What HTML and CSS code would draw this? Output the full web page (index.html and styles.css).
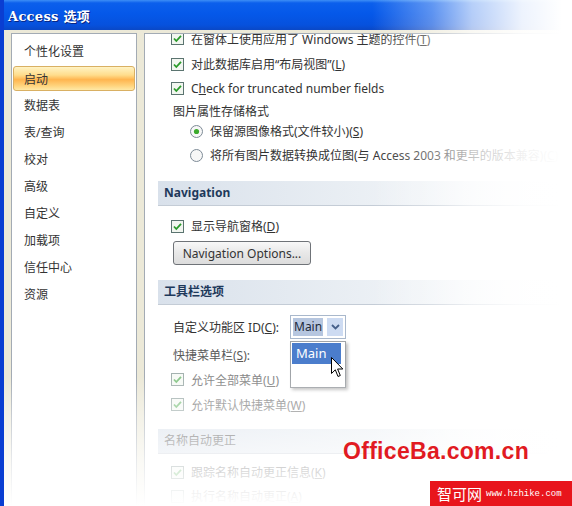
FILE: index.html
```html
<!DOCTYPE html>
<html lang="zh-CN">
<head>
    <meta charset="UTF-8">
    <title>Access 选项</title>
    <link rel="stylesheet" href="styles.css">
</head>
<body>
    <div class="window">
        <div class="titlebar">
            <span class="title">Access 选项</span>
        </div>
        <div class="frame">
            <ul class="nav">
                <li>个性化设置</li>
                <li class="active">启动</li>
                <li>数据表</li>
                <li>表/查询</li>
                <li>校对</li>
                <li>高级</li>
                <li>自定义</li>
                <li>加载项</li>
                <li>信任中心</li>
                <li>资源</li>
            </ul>
            <div class="pane">
                <div class="scroll">
                    <div class="row first">
                        <svg class="cb" viewBox="0 0 13 13"><rect x="0.5" y="0.5" width="12" height="12" fill="#f2f6f0" stroke="#5b7470"/><path d="M3 6.5 L5.3 9 L10 3.8" fill="none" stroke="#2a9a2a" stroke-width="1.8"/></svg>
                        <span>在窗体上使用应用了 Windows 主题的控件(<u>T</u>)</span>
                    </div>
                    <div class="row">
                        <svg class="cb" viewBox="0 0 13 13"><rect x="0.5" y="0.5" width="12" height="12" fill="#f2f6f0" stroke="#5b7470"/><path d="M3 6.5 L5.3 9 L10 3.8" fill="none" stroke="#2a9a2a" stroke-width="1.8"/></svg>
                        <span>对此数据库启用“布局视图”(<u>L</u>)</span>
                    </div>
                    <div class="row">
                        <svg class="cb" viewBox="0 0 13 13"><rect x="0.5" y="0.5" width="12" height="12" fill="#f2f6f0" stroke="#5b7470"/><path d="M3 6.5 L5.3 9 L10 3.8" fill="none" stroke="#2a9a2a" stroke-width="1.8"/></svg>
                        <span>C<u>h</u>eck for truncated number fields</span>
                    </div>
                    <div class="label">图片属性存储格式</div>
                    <div class="row radio-row">
                        <svg class="rb" viewBox="0 0 13 13"><circle cx="6.5" cy="6.5" r="6" fill="#f7f7f7" stroke="#7d8a96"/><circle cx="6.5" cy="6.5" r="2.6" fill="#3caa2c"/></svg>
                        <span>保留源图像格式(文件较小)(<u>S</u>)</span>
                    </div>
                    <div class="row radio-row">
                        <svg class="rb" viewBox="0 0 13 13"><circle cx="6.5" cy="6.5" r="6" fill="#f7f7f7" stroke="#7d8a96"/></svg>
                        <span>将所有图片数据转换成位图(与 Access 2003 和更早的版本兼容)(<u>C</u>)</span>
                    </div>

                    <div class="section nav-section">Navigation</div>
                    <div class="row after-section">
                        <svg class="cb" viewBox="0 0 13 13"><rect x="0.5" y="0.5" width="12" height="12" fill="#f2f6f0" stroke="#5b7470"/><path d="M3 6.5 L5.3 9 L10 3.8" fill="none" stroke="#2a9a2a" stroke-width="1.8"/></svg>
                        <span>显示导航窗格(<u>D</u>)</span>
                    </div>
                    <button class="btn">Navigation Options...</button>

                    <div class="section toolbar-section">工具栏选项</div>
                    <div class="field-row">
                        <span class="field-label">自定义功能区 ID(<u>C</u>):</span>
                        <div class="select">
                            <span class="select-value">Main</span>
                            <span class="select-arrow">
                                <svg viewBox="0 0 9 6" width="9" height="6"><path d="M1 1 L4.5 4.5 L8 1" fill="none" stroke="#46608a" stroke-width="1.8"/></svg>
                            </span>
                            <div class="dropdown">
                                <div class="dropdown-item">Main</div>
                            </div>
                            <svg class="cursor" viewBox="0 0 13 21" width="13" height="21"><path d="M0.5 0.5 L0.5 16.5 L4.3 12.8 L7 19.5 L9.3 18.5 L6.6 12 L11.8 12 Z" fill="#fff" stroke="#000" stroke-width="1"/></svg>
                        </div>
                    </div>
                    <div class="field-row second">
                        <span class="field-label dim">快捷菜单栏(<u>S</u>):</span>
                    </div>
                    <div class="row disabled">
                        <svg class="cb" viewBox="0 0 13 13"><rect x="0.5" y="0.5" width="12" height="12" fill="#f2f6f0" stroke="#5b7470"/><path d="M3 6.5 L5.3 9 L10 3.8" fill="none" stroke="#2a9a2a" stroke-width="1.8"/></svg>
                        <span>允许全部菜单(<u>U</u>)</span>
                    </div>
                    <div class="row disabled">
                        <svg class="cb" viewBox="0 0 13 13"><rect x="0.5" y="0.5" width="12" height="12" fill="#f2f6f0" stroke="#5b7470"/><path d="M3 6.5 L5.3 9 L10 3.8" fill="none" stroke="#2a9a2a" stroke-width="1.8"/></svg>
                        <span>允许默认快捷菜单(<u>W</u>)</span>
                    </div>

                    <div class="section name-section">名称自动更正</div>
                    <div class="row after-name">
                        <svg class="cb" viewBox="0 0 13 13"><rect x="0.5" y="0.5" width="12" height="12" fill="#f2f6f0" stroke="#5b7470"/><path d="M3 6.5 L5.3 9 L10 3.8" fill="none" stroke="#2a9a2a" stroke-width="1.8"/></svg>
                        <span>跟踪名称自动更正信息(<u>K</u>)</span>
                    </div>
                    <div class="row">
                        <svg class="cb" viewBox="0 0 13 13"><rect x="0.5" y="0.5" width="12" height="12" fill="#f2f6f0" stroke="#5b7470"/></svg>
                        <span>执行名称自动更正(<u>A</u>)</span>
                    </div>
                </div>
            </div>
        </div>

        <div class="fade-right"></div>
        <div class="fade-bottom"></div>

        <div class="mark">OfficeBa.com.cn</div>
        <div class="badge">
            <span class="badge-name">智可网</span>
            <span class="badge-url">www.hzhike.com</span>
        </div>
    </div>
</body>
</html>
```

FILE: styles.css
```css
body {
    margin: 0;
    padding: 0;
    background: #fff;
    font-family: 'Noto Sans', 'Noto Sans CJK SC', sans-serif;
    font-size: 12px;
    color: #333;
}
.window {
    position: relative;
    width: 572px;
    height: 506px;
    overflow: hidden;
    background: #ece9d8;
    border-left: 4px solid #0a3ed2;
    box-sizing: border-box;
}
.titlebar {
    height: 30px;
    margin-left: -4px;
    padding-left: 8px;
    background: linear-gradient(#3d8ef6 0, #0b5fec 3px, #0558e9 14px, #0651dd 25px, #0a48c6 30px);
    display: flex;
    align-items: center;
}
.title {
    color: #fff;
    font-family: 'DejaVu Serif', 'Noto Sans CJK SC', serif;
    font-weight: bold;
    font-size: 13px;
    letter-spacing: 0.3px;
    text-shadow: 1px 1px 0 #0a2580;
}
.frame {
    display: flex;
    gap: 7px;
    padding: 3px 0 0 7px;
    height: 476px;
    box-sizing: border-box;
}
.nav {
    list-style: none;
    margin: 0;
    padding: 4px 0 0;
    width: 126px;
    background: #fff;
    border: 1px solid #a3abb4;
    box-sizing: border-box;
    flex-shrink: 0;
}
.nav li {
    height: 27px;
    line-height: 27px;
    padding-left: 12px;
    color: #333;
}
.nav li.active {
    height: 25px;
    line-height: 25px;
    margin: 1px 1px;
    padding-left: 10px;
    border: 1px solid #d9b063;
    border-radius: 3px;
    background: linear-gradient(#fff3c4 0%, #ffdd8c 35%, #ffb54f 55%, #ffd27a 80%, #ffe9a6 100%);
    box-sizing: border-box;
}
.pane {
    flex: 1;
    background: #fff;
    border: 1px solid #a3abb4;
    border-right: none;
    overflow: hidden;
}
.scroll {
    margin-top: -9px;
    padding-left: 13px;
}
.row {
    display: flex;
    align-items: center;
    gap: 7px;
    height: 24px;
    padding-left: 13px;
    white-space: nowrap;
}
.row.first {
    height: 27px;
}
.cb, .rb {
    width: 13px;
    height: 13px;
    flex-shrink: 0;
}
.label {
    height: 19px;
    padding: 4px 0 0 15px;
    line-height: 15px;
    box-sizing: border-box;
}
.radio-row {
    padding-left: 32px;
}
.section {
    height: 25px;
    line-height: 24px;
    padding-left: 6px;
    font-weight: bold;
    color: #1e395b;
    background: linear-gradient(to right, #d9e1eb, #eef2f6 60%, #fbfcfd);
    border-bottom: 1px solid #c4ccd6;
    box-sizing: border-box;
}
.nav-section {
    margin-top: 14px;
}
.after-section {
    margin-top: 8px;
}
.btn {
    display: block;
    margin: 3px 0 0 15px;
    width: 138px;
    height: 24px;
    padding: 0;
    font-family: 'Noto Sans', sans-serif;
    font-size: 12px;
    color: #333;
    background: linear-gradient(#f8f8f8, #e8e8e8 50%, #dcdcdc);
    border: 1px solid #6f7378;
    border-radius: 3px;
}
.toolbar-section {
    margin-top: 15px;
}
.field-row {
    display: flex;
    align-items: center;
    gap: 7px;
    height: 24px;
    margin-top: 10px;
    padding-left: 15px;
}
.field-row.second {
    margin-top: 4px;
}
.field-label {
    width: 110px;
    white-space: nowrap;
}
.dim {
    color: #5a5a5a;
}
.select {
    position: relative;
    display: flex;
    align-items: center;
    justify-content: space-between;
    width: 56px;
    height: 24px;
    padding: 2px;
    border: 1px solid #a9b8cc;
    box-sizing: border-box;
    background: #fff;
}
.select-value {
    height: 18px;
    line-height: 18px;
    padding: 0 1px;
    background: #b6c6df;
    color: #1d2a3c;
}
.select-arrow {
    width: 16px;
    height: 18px;
    display: flex;
    align-items: center;
    justify-content: center;
    background: #cddbf2;
}
.dropdown {
    position: absolute;
    left: -1px;
    top: 25px;
    width: 56px;
    height: 47px;
    padding: 1px 4px 0 1px;
    background: #fff;
    border: 1px solid #a0a4a8;
    box-sizing: border-box;
    box-shadow: 2px 2px 3px rgba(0, 0, 0, 0.25);
}
.dropdown-item {
    height: 21px;
    line-height: 21px;
    padding-left: 4px;
    background: #4b7dcc;
    color: #fff;
    font-size: 13px;
}
.cursor {
    position: absolute;
    left: 40px;
    top: 41px;
}
.disabled {
    color: #888;
    height: 25px;
}
.disabled .cb {
    opacity: 0.55;
}
.name-section {
    margin-top: 12px;
    color: #555;
    font-weight: normal;
}
.after-name {
    margin-top: 6px;
}
.fade-right {
    position: absolute;
    top: 0;
    right: 0;
    width: 200px;
    height: 506px;
    background: linear-gradient(to right, rgba(255, 255, 255, 0) 0, rgba(255, 255, 255, 0.35) 60px, rgba(255, 255, 255, 0.7) 100px, rgba(255, 255, 255, 0.93) 150px, #fff 190px);
}
.fade-bottom {
    position: absolute;
    left: -4px;
    bottom: 0;
    width: 576px;
    height: 130px;
    background: linear-gradient(rgba(255, 255, 255, 0) 0, rgba(255, 255, 255, 0.4) 40px, rgba(255, 255, 255, 0.75) 85px, rgba(255, 255, 255, 0.95) 120px, #fff 130px);
}
.mark {
    position: absolute;
    left: 339px;
    top: 438px;
    font-family: 'Liberation Sans', sans-serif;
    font-weight: bold;
    font-size: 23px;
    letter-spacing: 0.3px;
    color: #e11a22;
}
.badge {
    position: absolute;
    right: 0;
    bottom: 0;
    width: 142px;
    height: 25px;
    padding-left: 7px;
    display: flex;
    align-items: center;
    gap: 4px;
    background: #e8151c;
    color: #fff;
    box-sizing: border-box;
}
.badge-name {
    font-family: 'Noto Sans CJK SC', sans-serif;
    font-size: 15px;
}
.badge-url {
    font-family: 'Liberation Mono', monospace;
    font-size: 9px;
}
```
